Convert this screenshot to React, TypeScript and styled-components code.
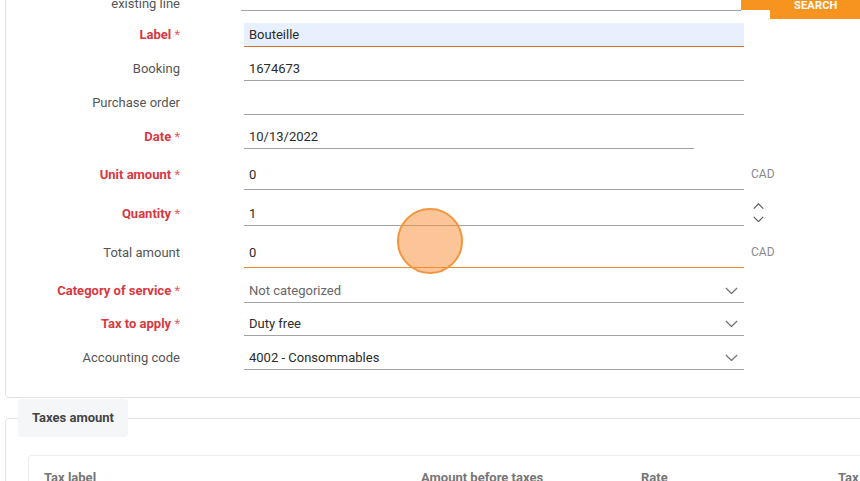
import React from "react";
import styled, {createGlobalStyle} from "styled-components";

const GlobalStyle = createGlobalStyle`
  html, body {
    margin: 0;
    padding: 0;
    background: #fff;
    overflow: hidden;
  }
  body {
    font-family: Roboto, "Liberation Sans", Arial, sans-serif;
    font-size: 13px;
    color: #333;
  }
`;

const Page = styled.div`
  position: relative;
  width: 860px;
  height: 481px;
  overflow: hidden;
  padding-left: 5px;
  box-sizing: border-box;
`;

const Panel = styled.section`
  width: 1000px;
  margin-top: -30px;
  padding: 9px 0 27px;
  border: 1px solid #e2e2e2;
  border-radius: 4px;
`;

const Row = styled.div<{ $gap?: number }>`
  display: flex;
  align-items: flex-start;
  margin-top: ${p => p.$gap ?? 10}px;
`;

const Label = styled.div<{ $required?: boolean }>`
  width: 174px;
  flex-shrink: 0;
  margin-right: 64px;
  text-align: right;
  line-height: 23px;
  font-size: 13px;
  color: ${p => p.$required ? "#d8383f" : "#555"};
  font-weight: ${p => p.$required ? 700 : 400};
  white-space: nowrap;

  span {
    font-weight: 400;
    color: #e06468;
  }
`;

const TwoLineLabel = styled(Label)`
  line-height: 16px;
  white-space: normal;
`;

const Field = styled.div<{ $width?: number; $tall?: boolean; $state?: "autofill" | "focus"; $muted?: boolean }>`
  position: relative;
  width: ${p => p.$width ?? 500}px;
  flex-shrink: 0;
  box-sizing: border-box;
  display: flex;
  align-items: flex-start;
  justify-content: space-between;
  padding: 0 6px ${p => p.$tall ? 3 : 0}px 5px;
  line-height: 23px;
  min-height: ${p => p.$tall ? 27 : 24}px;
  font-size: 13px;
  color: ${p => p.$muted ? "#666" : "#2b2b2b"};
  background: ${p => p.$state === "autofill" ? "#e8f0fe" : "transparent"};
  border-bottom: 1px solid ${p =>
    p.$state === "autofill" ? "#d27333" : p.$state === "focus" ? "#ee8a30" : "#a3a3a3"};
`;

const FirstField = styled(Field)`
  margin-top: 7px;
  margin-left: -3px;
  margin-right: 3px;
`;

const Suffix = styled.div`
  margin-left: 7px;
  line-height: 23px;
  font-size: 12px;
  color: #8a8a8a;
`;

const Spinner = styled.div`
  margin-left: 9px;
  display: flex;
  flex-direction: column;
  gap: 6px;
  padding-top: 1px;
`;

const SearchButton = styled.button`
  position: relative;
  margin: 11px 0 -7px 26px;
  width: 100px;
  height: 28px;
  padding: 0;
  border: none;
  background: #f7931f;
  color: #fff;
  font-family: Roboto, "Liberation Sans", Arial, sans-serif;
  font-size: 11px;
  font-weight: 700;
  letter-spacing: 0.2px;
  text-align: left;
  text-indent: 24px;

  &::before {
    content: "";
    position: absolute;
    left: -29px;
    top: 0;
    width: 29px;
    height: 19px;
    background: #f7931f;
  }
`;

const Section = styled.section`
  width: 1000px;
  margin-top: 20px;
  border: 1px solid #e4e4e4;
  border-radius: 4px;
  padding: 0 0 0 22px;
  box-sizing: border-box;
  height: 120px;
`;

const Legend = styled.div`
  display: block;
  width: fit-content;
  margin: -20px 0 0 -10px;
  padding: 0 14px;
  height: 38px;
  line-height: 38px;
  background: #f5f6f8;
  border-radius: 4px;
  font-size: 13px;
  font-weight: 700;
  color: #444;
`;

const TableCard = styled.div`
  margin-top: 18px;
  border: 1px solid #ececec;
  border-radius: 4px;
  padding: 13px 0 0 15px;
`;

const TableHead = styled.div`
  display: grid;
  grid-template-columns: 377px 220px 197px 1fr;
  font-size: 13px;
  font-weight: 700;
  color: #767676;
  line-height: 18px;
`;

const Cursor = styled.div`
  position: absolute;
  left: 397px;
  top: 208px;
  width: 66px;
  height: 66px;
  box-sizing: border-box;
  border-radius: 50%;
  border: 2px solid #f3953c;
  background: rgba(248, 140, 50, 0.5);
  pointer-events: none;
`;

const Chevron: React.FC<{ up?: boolean; size?: number; color?: string }> = ({up, size = 13, color = "#777"}) => (
  <svg width={size} height={size / 2 + 1} viewBox="0 0 14 8" fill="none" style={{display: "block"}}>
    <polyline
      points={up ? "1,7 7,1 13,7" : "1,1 7,7 13,1"}
      stroke={color}
      strokeWidth="1.4"
    />
  </svg>
);

const SelectArrow = styled.span`
  display: flex;
  align-items: center;
  height: 23px;
`;

type Line = {
  label: string;
  value: string;
  required?: boolean;
  gap?: number;
  width?: number;
  tall?: boolean;
  state?: "autofill" | "focus";
  select?: boolean;
  muted?: boolean;
  suffix?: "CAD" | "spin";
};

const lines: Line[] = [
  {label: "Label", value: "Bouteille", required: true, gap: 11, state: "autofill"},
  {label: "Booking", value: "1674673"},
  {label: "Purchase order", value: "", gap: 10},
  {label: "Date", value: "10/13/2022", required: true, width: 450},
  {label: "Unit amount", value: "0", required: true, gap: 14, tall: true, suffix: "CAD"},
  {label: "Quantity", value: "1", required: true, gap: 12, suffix: "spin"},
  {label: "Total amount", value: "0", gap: 15, tall: true, state: "focus", suffix: "CAD"},
  {label: "Category of service", value: "Not categorized", required: true, select: true, muted: true, gap: 11},
  {label: "Tax to apply", value: "Duty free", required: true, select: true, gap: 9},
  {label: "Accounting code", value: "4002 - Consommables", select: true},
];

export default function App() {
  return (
    <>
      <GlobalStyle/>
      <Page>
        <Panel>
          <Row $gap={0}>
            <TwoLineLabel>Add to an<br/>existing line</TwoLineLabel>
            <FirstField/>
            <SearchButton>SEARCH</SearchButton>
          </Row>

          {lines.map(l => (
            <Row key={l.label} $gap={l.gap}>
              <Label $required={l.required}>
                {l.label}{l.required && <span> *</span>}
              </Label>
              <Field $width={l.width} $tall={l.tall} $state={l.state} $muted={l.muted}>
                <span>{l.value}</span>
                {l.select && <SelectArrow><Chevron/></SelectArrow>}
              </Field>
              {l.suffix === "CAD" && <Suffix>CAD</Suffix>}
              {l.suffix === "spin" && (
                <Spinner>
                  <Chevron up size={11} color="#555"/>
                  <Chevron size={11} color="#555"/>
                </Spinner>
              )}
            </Row>
          ))}
        </Panel>

        <Section>
          <Legend>Taxes amount</Legend>
          <TableCard>
            <TableHead>
              <div>Tax label</div>
              <div>Amount before taxes</div>
              <div>Rate</div>
              <div>Tax</div>
            </TableHead>
          </TableCard>
        </Section>

        <Cursor/>
      </Page>
    </>
  );
}
